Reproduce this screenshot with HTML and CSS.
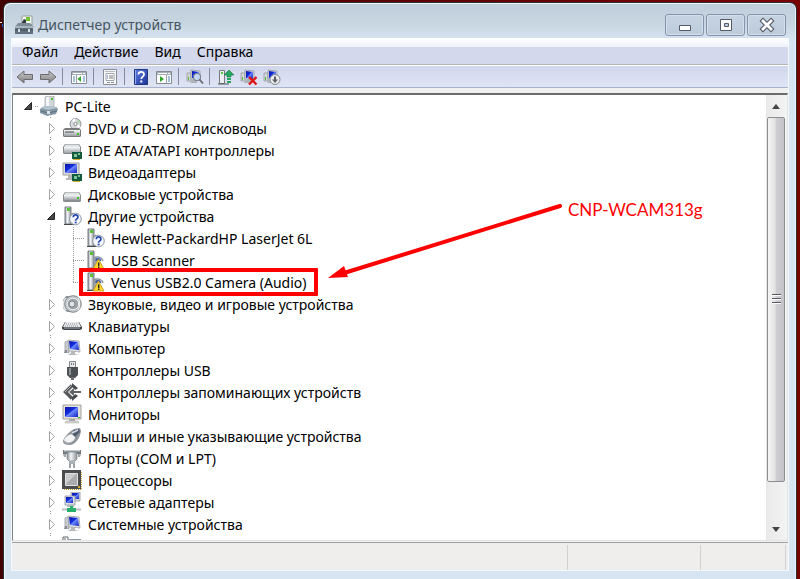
FILE: index.html
```html
<!DOCTYPE html>
<html lang="ru">
<head>
    <meta charset="UTF-8">
    <meta name="viewport" content="width=device-width, initial-scale=1.0">
    <title>Диспетчер устройств</title>
    <link rel="stylesheet" href="styles.css">
</head>
<body>

    <!-- icon set -->
    <svg class="sprite" aria-hidden="true">
        <defs>
            <linearGradient id="metal" x1="0" y1="0" x2="0" y2="1">
                <stop offset="0" stop-color="#f8f9fa"/>
                <stop offset="1" stop-color="#9a9fa4"/>
            </linearGradient>
            <linearGradient id="metalSide" x1="0" y1="0" x2="1" y2="0">
                <stop offset="0" stop-color="#8a9098"/>
                <stop offset="0.4" stop-color="#f4f6f8"/>
                <stop offset="1" stop-color="#8f959c"/>
            </linearGradient>
            <linearGradient id="screen" x1="0" y1="0" x2="1" y2="1">
                <stop offset="0" stop-color="#0a12a8"/>
                <stop offset="0.45" stop-color="#1530e0"/>
                <stop offset="0.5" stop-color="#6f8cff"/>
                <stop offset="1" stop-color="#0f1fc0"/>
            </linearGradient>
            <linearGradient id="help" x1="0" y1="0" x2="1" y2="1">
                <stop offset="0" stop-color="#5f7fe6"/>
                <stop offset="1" stop-color="#1c3396"/>
            </linearGradient>
            <linearGradient id="arrowGrey" x1="0" y1="0" x2="0" y2="1">
                <stop offset="0" stop-color="#c8c8c8"/>
                <stop offset="1" stop-color="#808080"/>
            </linearGradient>
        </defs>

        <symbol id="i-app" viewBox="0 0 20 20">
            <path d="M8 1h10v9H8z" fill="#f3f5f2" stroke="#98a09a"/>
            <path d="M12 2h4v4h-4z" fill="#72c435"/>
            <path d="M7 9l3-5 2 1v5z" fill="#333a3f"/>
            <path d="M4 8h12l4 4H1z" fill="#7d8c97"/>
            <path d="M1 11h18v8H1z" fill="#61717e"/>
            <path d="M1 11h18v2H1z" fill="#a9b6bf"/>
            <path d="M1 15h18" stroke="#3f4c57"/>
            <path d="M4 14h2v3H4zM14 14h2v3h-2z" fill="#d8dee2"/>
        </symbol>

        <symbol id="i-pc" viewBox="0 0 20 20">
            <path d="M6 1l3-1h6v13H6z" fill="#d4d7d9" stroke="#9ca1a5" stroke-width=".7"/>
            <path d="M7 1h3v11H7z" fill="#f5f6f7"/>
            <path d="M12 2h2v2h-2z" fill="#4fbf3a"/>
            <path d="M4 11h13l2 2-2 5-9 2-7-3v-4z" fill="#8297a4"/>
            <path d="M2 12l7 2 9-2-3-2H5z" fill="#b4c4ce"/>
            <path d="M2 15l7 2 9-2" fill="none" stroke="#5c707d"/>
            <path d="M8 15h3v3H8z" fill="#dce3e8"/>
        </symbol>

        <symbol id="i-drive" viewBox="0 0 20 20">
            <path d="M3 8h14l2 3v6l-1 1H2l-1-1v-6z" fill="#8b8e91"/>
            <path d="M3.500 8.500h13L18 11H2z" fill="#e2e4e6"/>
            <path d="M2 11h16v5H2z" fill="url(#metal)"/>
            <path d="M15 13h2v2h-2z" fill="#45c02f"/>
        </symbol>

        <symbol id="i-dvd" viewBox="0 0 20 20">
            <circle cx="13.500" cy="6" r="5.500" fill="#d7d9de" stroke="#92969c"/>
            <path d="M13.500 6L10 2l3-1.500zM13.500 6l5 2-2 3z" fill="#fff"/>
            <path d="M13.500 6l3-4 2 2z" fill="#a8d8a0"/>
            <circle cx="13.500" cy="6" r="1.600" fill="#fff" stroke="#888"/>
            <path d="M3 10h14l2 2v6l-1 1H2l-1-1v-6z" fill="#77797c"/>
            <path d="M2 12h16v6H2z" fill="url(#metal)"/>
            <path d="M3 14h9" stroke="#444"/>
            <path d="M15 15h2v2h-2z" fill="#45c02f"/>
        </symbol>

        <symbol id="i-chip" viewBox="0 0 20 20">
            <path d="M10 12h10v7H10z" fill="#125c3d"/>
            <path d="M12 14h3v3h-3zM16 13h2v2h-2z" fill="#7fc59b"/>
            <path d="M11 19h7v1h-7z" fill="#d9ad2b"/>
        </symbol>

        <symbol id="i-ide" viewBox="0 0 20 20">
            <path d="M3 4h14l2 3v6l-1 1H2l-1-1V7z" fill="#85888b"/>
            <path d="M3.500 4.500h13L18 7H2z" fill="#e2e4e6"/>
            <path d="M2 7h16v6H2z" fill="url(#metal)"/>
            <use href="#i-chip"/>
        </symbol>

        <symbol id="i-monitor" viewBox="0 0 20 20">
            <path d="M1 1h18v14H1z" fill="#e4e1d8" stroke="#a3a19a"/>
            <path d="M3 3h13v10H3z" fill="url(#screen)"/>
            <path d="M7 15h6v2H7z" fill="#a9aaa6"/>
            <path d="M4 17h12l1 2H3z" fill="#d6d6d2" stroke="#a5a5a0" stroke-width=".5"/>
            <path d="M16 13h2v1h-2z" fill="#43b732"/>
        </symbol>

        <symbol id="i-video" viewBox="0 0 20 20">
            <path d="M1 1h16v12H1z" fill="#dddeda" stroke="#9c9d99"/>
            <path d="M3 2h12v9H3z" fill="url(#screen)"/>
            <path d="M6 13h5v3H6zM4 16h8v2H4z" fill="#b7b9b9"/>
            <use href="#i-chip"/>
        </symbol>

        <symbol id="i-device" viewBox="0 0 20 20">
            <path d="M3 1h6v17H3z" fill="url(#metalSide)" stroke="#777c80"/>
            <path d="M5 2h3v3H5z" fill="#54c433"/>
            <path d="M10 7v11h3V9z" fill="#b6babd" stroke="#75797d" stroke-width=".7"/>
            <path d="M2 18.500h10" stroke="#44484b"/>
        </symbol>

        <symbol id="i-question" viewBox="0 0 20 20">
            <use href="#i-device"/>
            <circle cx="13.500" cy="13" r="5.800" fill="#f4f6f9" stroke="#8e99a5"/>
            <path d="M11.300 11.200c0-3 4.600-3 4.600 0 0 1.800-2.300 1.700-2.300 3.600" fill="none" stroke="#2446b0" stroke-width="1.700"/>
            <path d="M12.700 15.700h2v1.600h-2z" fill="#2446b0"/>
        </symbol>

        <symbol id="i-warning" viewBox="0 0 20 20">
            <use href="#i-device"/>
            <path d="M8.500 9c1-3 8-3 9.500 2" fill="none" stroke="#8995a3" stroke-width="1.500"/>
            <path d="M11 11c0-3 4-3 4.500 0" fill="none" stroke="#3a57a8" stroke-width="1.500"/>
            <path d="M13.500 9l5.500 10H8z" fill="#ffd52e" stroke="#bf9418" stroke-width=".8"/>
            <path d="M13 12.500h1.400v3.400H13zM13 16.600h1.400V18H13z" fill="#222"/>
        </symbol>

        <symbol id="i-sound" viewBox="0 0 20 20">
            <path d="M4 2h8v16H5L1 14V6z" fill="#8f9499"/>
            <path d="M3 4h3v12H3L1 13V7z" fill="#dfe2e4"/>
            <circle cx="11" cy="10" r="8.300" fill="#c2c6ca" stroke="#858a8f"/>
            <circle cx="11" cy="10" r="5.800" fill="#9da3a8" stroke="#eceff1"/>
            <circle cx="10" cy="10" r="3" fill="#dfe4e8" stroke="#7c8288"/>
            <path d="M16 4c2 3 2 9 0 12" fill="none" stroke="#f4f6f8"/>
        </symbol>

        <symbol id="i-keyboard" viewBox="0 0 20 20">
            <path d="M3 6h14l3 5v2l-2 1H2l-2-1v-2z" fill="#41454a"/>
            <path d="M3.500 6h13l2.500 5H1z" fill="#e6e8ec"/>
            <path d="M4 8h12M3 10h14" stroke="#8b9098" stroke-dasharray="1 1"/>
            <path d="M2 12h16" stroke="#a5a9ae"/>
        </symbol>

        <symbol id="i-computer" viewBox="0 0 20 20">
            <path d="M3 4l4-1v12l-4-2z" fill="#c9cdd1" stroke="#8b9094" stroke-width=".7"/>
            <path d="M3 12h2v3H2z" fill="#83898e"/>
            <path d="M6 2l11 1 1 11-11-1z" fill="#dddfe2" stroke="#93979b" stroke-width=".7"/>
            <path d="M7 3l9 1 1 8-9-1z" fill="url(#screen)"/>
            <path d="M9 13l4 1v2l4 1H6l3-2z" fill="#b4b8bb"/>
        </symbol>

        <symbol id="i-usb" viewBox="0 0 20 20">
            <path d="M7.500 1.500h6V8h-6z" fill="#e6e8ea" stroke="#85898d"/>
            <path d="M9 3h1v2H9zM11 3h1v2h-1z" fill="#777"/>
            <path d="M5 7h11v8l-3 3H8l-3-3z" fill="#4c5054"/>
            <path d="M7 8h2v7H7z" fill="#8d9297"/>
            <path d="M9 17h3v3H9z" fill="#6a6e72"/>
        </symbol>

        <symbol id="i-storage" viewBox="0 0 20 20">
            <path d="M10 3.500L3.500 10l6.500 6.500" fill="none" stroke="#55595c" stroke-width="3.500"/>
            <path d="M10 1l6 5-2.500 2L10 5zM10 19l6-5-2.500-2L10 15z" fill="#4a4d50"/>
            <path d="M9.500 3.500L3 10" stroke="#b0b4b7"/>
            <path d="M7 10l5-4v3h7v2h-7v3z" fill="#606467"/>
        </symbol>

        <symbol id="i-mouse" viewBox="0 0 20 20">
            <path d="M1 15c1-4 6-9 11-12l6-1 1 3c-1 7-5 13-11 14-4 0-7-1-7-4z" fill="#8f9499"/>
            <path d="M2 14c1-3 5-6 9-6 3 1 3 4 0 7-3 3-8 3-9-1z" fill="#f1f3f5"/>
            <path d="M12 4l5-1 1 3-5 5-3-3z" fill="#535d70"/>
            <path d="M10 7l6-3" stroke="#d6dbe3" stroke-width="1.500"/>
            <path d="M3 15c2 3 6 2 8 0" fill="none" stroke="#aeb3b8"/>
        </symbol>

        <symbol id="i-port" viewBox="0 0 20 20">
            <path d="M1 2h18v4H1z" fill="#747c82"/>
            <path d="M2 2h16v1.500H2z" fill="#c5cbcf"/>
            <path d="M5 4h10v7l-2 2H7l-2-2z" fill="url(#metalSide)" stroke="#6e757b" stroke-width=".6"/>
            <path d="M1 6h3v3H2zM16 6h3l-1 3h-2z" fill="#a2a9af"/>
            <path d="M7 13h6v3H7z" fill="#a9b0b5"/>
            <path d="M8 16v4M12 16v4" stroke="#7e858b" stroke-width="1.500"/>
        </symbol>

        <symbol id="i-cpu" viewBox="0 0 20 20">
            <path d="M2 19.500h18M19.500 2v17" stroke="#c99b38" stroke-dasharray="1 1"/>
            <path d="M0 0h19v19H0z" fill="#4a4b4c"/>
            <path d="M3.500 3.500h12v12h-12z" fill="#a9abac" stroke="#dfe0e1"/>
            <path d="M4 4h10L4 14z" fill="#c9cbcc"/>
            <path d="M16 16h2v2h-2z" fill="#e0ac32"/>
        </symbol>

        <symbol id="i-network" viewBox="0 0 20 20">
            <path d="M9 0h9v9H9z" fill="#d4d9df" stroke="#8f959c" stroke-width=".8"/>
            <path d="M10 1h7v6h-7z" fill="url(#screen)"/>
            <path d="M3 4h10v9H3z" fill="#dbdfe3" stroke="#8f959c" stroke-width=".8"/>
            <path d="M4 5h7v6H4z" fill="url(#screen)"/>
            <path d="M5 13h7v2H5z" fill="#b7bbbf"/>
            <path d="M0 17.500h19" stroke="#b9bfc2" stroke-width="2"/>
            <path d="M8 14h3v2h3v4H5v-4h3z" fill="#25b06c"/>
        </symbol>

        <symbol id="i-back" viewBox="0 0 18 18">
            <path d="M1 9l7-6v3.500h8.500v5H8V15z" fill="url(#arrowGrey)" stroke="#6b6b6b"/>
        </symbol>

        <symbol id="i-forward" viewBox="0 0 18 18">
            <path d="M17 9l-7-6v3.500H1.500v5H10V15z" fill="url(#arrowGrey)" stroke="#6b6b6b"/>
        </symbol>

        <symbol id="i-tree" viewBox="0 0 18 18">
            <path d="M1.500 3.500h15v12h-15z" fill="#fff" stroke="#858b92"/>
            <path d="M2 4h14v3H2z" fill="#a5adb6"/>
            <path d="M3 5.500h9M13 5.500h2" stroke="#fff"/>
            <path d="M6.500 7v8" stroke="#9aa1a8"/>
            <path d="M3 9h2M3 11h2M3 13h2M13 9h2M13 11h2M13 13h2" stroke="#4c80c4"/>
            <path d="M11 8v6l-3.500-3z" fill="#2fa52b"/>
        </symbol>

        <symbol id="i-props" viewBox="0 0 18 18">
            <path d="M2.500 1.500h13v15h-13z" fill="#f7f8fa" stroke="#8a8e94"/>
            <path d="M4 3.500h10" stroke="#b4b9c0"/>
            <path d="M5 5.500h8v7H5z" fill="#fff" stroke="#a0a5ac"/>
            <path d="M8 8h4M8 10h4" stroke="#777"/>
            <path d="M6 8h1M6 10h1" stroke="#3b74c7"/>
            <path d="M6 14.500h3M10 14.500h3" stroke="#8a8f96"/>
        </symbol>

        <symbol id="i-help" viewBox="0 0 18 18">
            <path d="M2.500 1.500h13v15h-13z" fill="url(#help)" stroke="#20377f"/>
            <path d="M3.500 2v14" stroke="#94aaf0"/>
            <path d="M6.500 6.500c0-3.500 5.500-3.500 5.500 0 0 2.300-2.700 2-2.700 4.500" fill="none" stroke="#fff" stroke-width="1.800"/>
            <path d="M8.300 12.500h2v2h-2z" fill="#fff"/>
        </symbol>

        <symbol id="i-action" viewBox="0 0 18 18">
            <path d="M1.500 3.500h15v12h-15z" fill="#fff" stroke="#858b92"/>
            <path d="M2 4h14v3H2z" fill="#a5adb6"/>
            <path d="M3 5.500h9M13 5.500h2" stroke="#fff"/>
            <path d="M11.500 7v8" stroke="#9aa1a8"/>
            <path d="M13 9h2M13 11h2M13 13h2" stroke="#4c80c4"/>
            <path d="M5 8v6l4-3z" fill="#2fa52b"/>
        </symbol>

        <symbol id="i-pcsmall" viewBox="0 0 18 18">
            <path d="M1 5h4v8H1z" fill="#d5d8da" stroke="#8c9094" stroke-width=".7"/>
            <path d="M2 9h1v3H2z" fill="#56bd36"/>
            <path d="M5 2l9 1v9l-9-1z" fill="#d8dbe0" stroke="#8c9094" stroke-width=".7"/>
            <path d="M6 3l7 1v7l-7-1z" fill="url(#screen)"/>
            <path d="M6 12h5v3H4z" fill="#aeb3b7"/>
        </symbol>

        <symbol id="i-scan" viewBox="0 0 18 18">
            <use href="#i-pcsmall"/>
            <circle cx="11" cy="9" r="3.500" fill="#d7e8f8" fill-opacity=".85" stroke="#77818e" stroke-width="1.200"/>
            <path d="M13.500 11.500l3.500 4" stroke="#656b73" stroke-width="1.800"/>
        </symbol>

        <symbol id="i-update" viewBox="0 0 18 18">
            <path d="M2.500 2.500h5v13h-5z" fill="#eceeef" stroke="#777c80"/>
            <path d="M4 4h2v2H4z" fill="#54c433"/>
            <path d="M1 16h11" stroke="#4c5054"/>
            <path d="M12 2l5 5h-3v2h-4V7H7z" fill="#25a560" stroke="#177443" stroke-width=".6"/>
            <path d="M10 10h4v2h-4zM10 13h4v2h-4z" fill="#25a560"/>
        </symbol>

        <symbol id="i-remove" viewBox="0 0 18 18">
            <use href="#i-pcsmall"/>
            <path d="M9 9l7.500 7.500M16.500 9L9 16.500" stroke="#e01818" stroke-width="2.400"/>
        </symbol>

        <symbol id="i-disable" viewBox="0 0 18 18">
            <use href="#i-pcsmall"/>
            <circle cx="12" cy="11.500" r="5" fill="#e9ebec" stroke="#85898c"/>
            <path d="M11 8.500h2v3h2l-3 3.500-3-3.500h2z" fill="#5c6063"/>
        </symbol>

        <symbol id="i-open" viewBox="0 0 12 12">
            <path d="M8.500 2.500v7h-7z" fill="#484848" stroke="#262626"/>
        </symbol>

        <symbol id="i-closed" viewBox="0 0 12 12">
            <path d="M3.500 1.500v10l5-5z" fill="#fff" stroke="#a2a2a2"/>
        </symbol>
    </svg>

    <div class="window">
        <header class="titlebar">
            <svg class="icon"><use href="#i-app"/></svg>
            <h1>Диспетчер устройств</h1>
            <div class="controls">
                <button class="control" aria-label="Свернуть">
                    <svg viewBox="0 0 16 16"><path d="M2.500 8.500h11v5h-11z" fill="#fff" stroke="#555a68"/></svg>
                </button>
                <button class="control" aria-label="Развернуть">
                    <svg viewBox="0 0 16 16"><path d="M2.500 2.500h11v11h-11z" fill="#fff" stroke="#555a68"/><path d="M6.500 6.500h4v3h-4z" fill="#b9c8da" stroke="#555a68"/></svg>
                </button>
                <button class="control" aria-label="Закрыть">
                    <svg viewBox="0 0 16 16"><path d="M4 4l8 8M12 4l-8 8" stroke="#555a68" stroke-width="5" stroke-linecap="square"/><path d="M4 4l8 8M12 4l-8 8" stroke="#fff" stroke-width="2.800" stroke-linecap="square"/></svg>
                </button>
            </div>
        </header>

        <main class="client">
            <nav class="menubar">
                <button>Файл</button>
                <button>Действие</button>
                <button>Вид</button>
                <button>Справка</button>
            </nav>

            <div class="toolbar">
                <button aria-label="Назад"><svg><use href="#i-back"/></svg></button>
                <button aria-label="Вперед"><svg><use href="#i-forward"/></svg></button>
                <span class="separator"></span>
                <button aria-label="Дерево консоли"><svg><use href="#i-tree"/></svg></button>
                <span class="separator"></span>
                <button aria-label="Свойства"><svg><use href="#i-props"/></svg></button>
                <span class="separator"></span>
                <button aria-label="Справка"><svg><use href="#i-help"/></svg></button>
                <button aria-label="Панель действий"><svg><use href="#i-action"/></svg></button>
                <span class="separator"></span>
                <button aria-label="Обновить конфигурацию"><svg><use href="#i-scan"/></svg></button>
                <span class="separator"></span>
                <button aria-label="Обновить драйверы"><svg><use href="#i-update"/></svg></button>
                <button aria-label="Удалить"><svg><use href="#i-remove"/></svg></button>
                <button aria-label="Отключить"><svg><use href="#i-disable"/></svg></button>
            </div>

            <section class="panel">
                <div class="tree">
                    <div class="row root">
                        <button class="expander" aria-label="Свернуть"><svg><use href="#i-open"/></svg></button>
                        <svg class="icon"><use href="#i-pc"/></svg>
                        <span>PC-Lite</span>
                    </div>
                    <ul class="branch">
                        <li>
                            <div class="row">
                                <button class="expander" aria-label="Развернуть"><svg><use href="#i-closed"/></svg></button>
                                <svg class="icon"><use href="#i-dvd"/></svg>
                                <span>DVD и CD-ROM дисководы</span>
                            </div>
                        </li>
                        <li>
                            <div class="row">
                                <button class="expander" aria-label="Развернуть"><svg><use href="#i-closed"/></svg></button>
                                <svg class="icon"><use href="#i-ide"/></svg>
                                <span>IDE ATA/ATAPI контроллеры</span>
                            </div>
                        </li>
                        <li>
                            <div class="row">
                                <button class="expander" aria-label="Развернуть"><svg><use href="#i-closed"/></svg></button>
                                <svg class="icon"><use href="#i-video"/></svg>
                                <span>Видеоадаптеры</span>
                            </div>
                        </li>
                        <li>
                            <div class="row">
                                <button class="expander" aria-label="Развернуть"><svg><use href="#i-closed"/></svg></button>
                                <svg class="icon"><use href="#i-drive"/></svg>
                                <span>Дисковые устройства</span>
                            </div>
                        </li>
                        <li>
                            <div class="row">
                                <button class="expander" aria-label="Свернуть"><svg><use href="#i-open"/></svg></button>
                                <svg class="icon"><use href="#i-question"/></svg>
                                <span>Другие устройства</span>
                            </div>
                            <ul class="leaves">
                                <li class="row">
                                    <svg class="icon"><use href="#i-question"/></svg>
                                    <span>Hewlett-PackardHP LaserJet 6L</span>
                                </li>
                                <li class="row">
                                    <svg class="icon"><use href="#i-warning"/></svg>
                                    <span>USB Scanner</span>
                                </li>
                                <li class="row marked">
                                    <svg class="icon"><use href="#i-warning"/></svg>
                                    <span>Venus USB2.0 Camera (Audio)</span>
                                </li>
                            </ul>
                        </li>
                        <li>
                            <div class="row">
                                <button class="expander" aria-label="Развернуть"><svg><use href="#i-closed"/></svg></button>
                                <svg class="icon"><use href="#i-sound"/></svg>
                                <span>Звуковые, видео и игровые устройства</span>
                            </div>
                        </li>
                        <li>
                            <div class="row">
                                <button class="expander" aria-label="Развернуть"><svg><use href="#i-closed"/></svg></button>
                                <svg class="icon"><use href="#i-keyboard"/></svg>
                                <span>Клавиатуры</span>
                            </div>
                        </li>
                        <li>
                            <div class="row">
                                <button class="expander" aria-label="Развернуть"><svg><use href="#i-closed"/></svg></button>
                                <svg class="icon"><use href="#i-computer"/></svg>
                                <span>Компьютер</span>
                            </div>
                        </li>
                        <li>
                            <div class="row">
                                <button class="expander" aria-label="Развернуть"><svg><use href="#i-closed"/></svg></button>
                                <svg class="icon"><use href="#i-usb"/></svg>
                                <span>Контроллеры USB</span>
                            </div>
                        </li>
                        <li>
                            <div class="row">
                                <button class="expander" aria-label="Развернуть"><svg><use href="#i-closed"/></svg></button>
                                <svg class="icon"><use href="#i-storage"/></svg>
                                <span>Контроллеры запоминающих устройств</span>
                            </div>
                        </li>
                        <li>
                            <div class="row">
                                <button class="expander" aria-label="Развернуть"><svg><use href="#i-closed"/></svg></button>
                                <svg class="icon"><use href="#i-monitor"/></svg>
                                <span>Мониторы</span>
                            </div>
                        </li>
                        <li>
                            <div class="row">
                                <button class="expander" aria-label="Развернуть"><svg><use href="#i-closed"/></svg></button>
                                <svg class="icon"><use href="#i-mouse"/></svg>
                                <span>Мыши и иные указывающие устройства</span>
                            </div>
                        </li>
                        <li>
                            <div class="row">
                                <button class="expander" aria-label="Развернуть"><svg><use href="#i-closed"/></svg></button>
                                <svg class="icon"><use href="#i-port"/></svg>
                                <span>Порты (COM и LPT)</span>
                            </div>
                        </li>
                        <li>
                            <div class="row">
                                <button class="expander" aria-label="Развернуть"><svg><use href="#i-closed"/></svg></button>
                                <svg class="icon"><use href="#i-cpu"/></svg>
                                <span>Процессоры</span>
                            </div>
                        </li>
                        <li>
                            <div class="row">
                                <button class="expander" aria-label="Развернуть"><svg><use href="#i-closed"/></svg></button>
                                <svg class="icon"><use href="#i-network"/></svg>
                                <span>Сетевые адаптеры</span>
                            </div>
                        </li>
                        <li>
                            <div class="row">
                                <button class="expander" aria-label="Развернуть"><svg><use href="#i-closed"/></svg></button>
                                <svg class="icon"><use href="#i-computer"/></svg>
                                <span>Системные устройства</span>
                            </div>
                        </li>
                        <li>
                            <div class="row">
                                <span class="expander"></span>
                                <svg class="icon" viewBox="0 0 20 20"><path d="M1 6V1h5v5M3 2v3" fill="none" stroke="#62676d"/><path d="M7 3h12v4H7z" fill="#8b98a8"/></svg>
                            </div>
                        </li>
                    </ul>
                </div>

                <div class="scrollbar">
                    <button aria-label="Вверх"><svg viewBox="0 0 8 5"><path d="M4 0l4 5H0z" fill="#444"/></svg></button>
                    <div class="track">
                        <div class="thumb"><i></i><i></i><i></i></div>
                    </div>
                    <button aria-label="Вниз"><svg viewBox="0 0 8 5"><path d="M0 0h8L4 5z" fill="#444"/></svg></button>
                </div>

                <div class="note">
                    <svg viewBox="0 0 236 80">
                        <path d="M232 4L16 71" stroke="#f00" stroke-width="4" stroke-linecap="round"/>
                        <path d="M0 76l16-12 4 11z" fill="#f00"/>
                    </svg>
                    <span>CNP-WCAM313g</span>
                </div>
            </section>

            <footer class="statusbar">
                <div></div>
                <div></div>
                <div></div>
            </footer>
        </main>
    </div>

</body>
</html>
```

FILE: styles.css
```css
* {
    box-sizing: border-box;
}

body {
    margin: 0;
    height: 100vh;
    padding: 2px 3px 0 3px;
    overflow: hidden;
    background-image: linear-gradient(#fff, #fff), linear-gradient(#1d5fd0, #1d5fd0), linear-gradient(90deg, #420000, #7a0000);
    background-size: 2px 1px, 1px 3px, auto;
    background-position: 0 22px, 2px 24px, 0 0;
    background-repeat: no-repeat;
    font-family: "Noto Sans", "Open Sans", sans-serif;
    font-size: 14px;
    color: #000;
}

button {
    margin: 0;
    padding: 0;
    border: none;
    background: none;
    font: inherit;
    color: inherit;
}

ul {
    margin: 0;
    padding: 0;
    list-style: none;
}

.sprite {
    position: absolute;
    width: 0;
    height: 0;
}

.icon {
    flex: none;
    width: 20px;
    height: 20px;
}

.window {
    display: flex;
    flex-direction: column;
    height: 100%;
    padding: 0 7px 8px 7px;
    border: 1px solid #2b3036;
    border-bottom: none;
    border-radius: 7px 7px 0 0;
    background: linear-gradient(#bfcedb, #c8d5e1 20px, #d7e5f2 38px);
    box-shadow: inset 1px 1px 0 #f2f7fb, inset -1px 0 0 #e8f4fb;
}

/* title */
.titlebar {
    display: flex;
    align-items: center;
    height: 35px;
    padding: 8px 3px 0 3px;
}

.titlebar h1 {
    flex: 1;
    margin: 0 0 0 4px;
    font-size: 14px;
    font-weight: normal;
    color: #465562;
}

.controls {
    display: flex;
    gap: 2px;
}

.control {
    display: flex;
    align-items: center;
    justify-content: center;
    width: 39px;
    height: 22px;
    border: 1px solid #8594ad;
    border-radius: 3px;
    background: linear-gradient(#c6d4e2, #bccbdb);
    box-shadow: inset 0 0 0 1px #d3dfea;
}

.control svg {
    width: 16px;
    height: 16px;
}

.client {
    display: flex;
    flex: 1;
    flex-direction: column;
    min-height: 0;
    border: 1px solid #f3f8fc;
    border-top: none;
    background: #f0f0f0;
}

.menubar {
    display: flex;
    gap: 16px;
    height: 27px;
    padding: 0 10px;
    border-bottom: 1px solid #b4b3b7;
    background: linear-gradient(#fff, #edf1f8 9px, #d3d8ec 9px);
}

.toolbar {
    display: flex;
    align-items: center;
    height: 23px;
    padding: 0 1px;
    border-top: 1px solid #fff;
    border-bottom: 1px solid #a9b2cd;
    background: linear-gradient(#d1d7eb, #dfe4f5);
}

.toolbar button {
    display: flex;
    justify-content: center;
    width: 23px;
}

.toolbar svg {
    width: 18px;
    height: 18px;
}

.separator {
    width: 8px;
    height: 17px;
    background: linear-gradient(#858b9a, #858b9a) 3px 0 / 1px 100% no-repeat;
}

/* device list */
.panel {
    position: relative;
    display: flex;
    flex: 1;
    min-height: 0;
    margin: 5px 0 1px;
    border: 1px solid #828282;
    border-top: 2px solid #6b6b6b;
    border-right-color: #e3e3e3;
    border-bottom-color: #e3e3e3;
    background: #fff;
}

.tree {
    flex: 1;
    overflow: hidden;
}

.row {
    display: flex;
    align-items: center;
    height: 22px;
    white-space: nowrap;
}

.row .icon {
    margin: 0 6px 0 4px;
}

.root {
    padding-left: 10px;
}

.expander {
    width: 12px;
    height: 12px;
}

.expander svg {
    display: block;
    width: 12px;
    height: 12px;
}

.branch {
    padding-left: 33px;
    background: repeating-linear-gradient(#999 0 1px, transparent 1px 2px) 37px 0 / 1px 100% no-repeat;
}

.branch .expander {
    background: #fff;
    box-shadow: 0 0 0 3px #fff;
}

.branch > li > .row,
.root {
    background: repeating-linear-gradient(90deg, #999 0 1px, transparent 1px 2px) 12px 11px / 4px 1px no-repeat;
}

.root {
    background-position: 22px 11px;
}

.leaves {
    padding-left: 27px;
    background: repeating-linear-gradient(#999 0 1px, transparent 1px 2px) 27px 0 / 1px 55px no-repeat;
}

.leaves .row {
    position: relative;
    padding-left: 8px;
    background: repeating-linear-gradient(90deg, #999 0 1px, transparent 1px 2px) 0 11px / 12px 1px no-repeat;
}

.marked::after {
    content: "";
    position: absolute;
    top: -3px;
    left: 6px;
    box-sizing: border-box;
    width: 239px;
    height: 28px;
    border: 4px solid #f00;
    border-radius: 1px;
}

.scrollbar {
    display: flex;
    flex-direction: column;
    width: 21px;
    border-left: 1px solid #e6e6e6;
    background: linear-gradient(90deg, #eaeaea, #f3f3f3);
}

.scrollbar button {
    display: flex;
    align-items: center;
    justify-content: center;
    height: 22px;
    padding-right: 2px;
}

.scrollbar button svg {
    width: 8px;
    height: 5px;
}

.track {
    flex: 1;
}

.thumb {
    display: flex;
    flex-direction: column;
    align-items: center;
    justify-content: center;
    gap: 2px;
    height: 91%;
    margin-right: 2px;
    border: 1px solid #8e8e92;
    border-radius: 2px;
    background: linear-gradient(90deg, #f5f5f5, #e2e2e4 45%, #cfcfd3 50%, #c3c3c8);
}

.thumb i {
    width: 9px;
    height: 2px;
    border-top: 1px solid #55585c;
    background: #fff;
}

.note {
    position: absolute;
    top: 107px;
    left: 315px;
    display: flex;
    color: #f00;
}

.note svg {
    width: 236px;
    height: 80px;
}

.note span {
    margin-left: 4px;
    font-family: Lato, sans-serif;
    font-size: 17px;
    line-height: 16px;
}

/* status */
.statusbar {
    display: flex;
    height: 28px;
    padding-right: 2px;
    border-top: 1px solid #a0a0a0;
    background: #f0eded;
}

.statusbar div {
    flex: 0 0 85px;
    margin-top: 2px;
    border-right: 1px solid #d2d0d0;
}

.statusbar div:first-child {
    flex: 1;
}

.statusbar div:nth-child(2) {
    flex-basis: 133px;
}
```
